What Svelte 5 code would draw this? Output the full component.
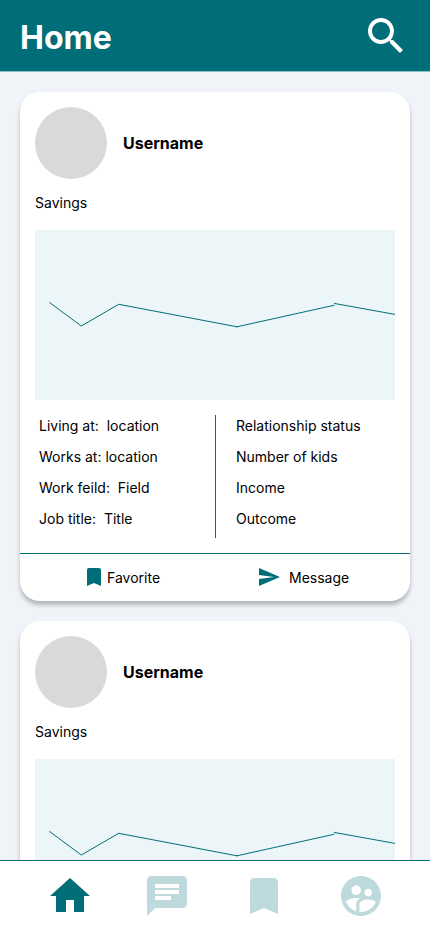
<script>
  const left = ['Living at:  location', 'Works at: location', 'Work feild:  Field', 'Job title:  Title'];
  const right = ['Relationship status', 'Number of kids', 'Income', 'Outcome'];
  const cards = [{ name: 'Username' }, { name: 'Username' }];
  const bookmark = 'M17 3H7c-1.1 0-1.99.9-1.99 2L5 21l7-3 7 3V5c0-1.1-.9-2-2-2z';
  const tabs = [
    { label: 'Home', active: true, d: 'M10 20v-6h4v6h5v-8h3L12 3 2 12h3v8z' },
    { label: 'Messages', d: 'M20 2H4c-1.1 0-1.99.9-1.99 2L2 22l4-4h14c1.1 0 2-.9 2-2V4c0-1.1-.9-2-2-2zM6 6h12v2H6zm0 3h12v2H6zm0 3h8v2H6z' },
    { label: 'Favorites', d: bookmark },
    { label: 'Profile', d: 'M12 2C6.48 2 2 6.48 2 12s4.48 10 10 10 10-4.48 10-10S17.52 2 12 2zm3.61 6.34c1.07 0 1.93.86 1.93 1.93 0 1.07-.86 1.93-1.93 1.93-1.07 0-1.93-.86-1.93-1.93-.01-1.07.86-1.93 1.93-1.93zm-6-1.58c1.3 0 2.36 1.06 2.36 2.36 0 1.3-1.06 2.36-2.36 2.36s-2.36-1.06-2.36-2.36c0-1.31 1.05-2.36 2.36-2.36zm0 9.13v3.75c-2.4-.75-4.3-2.6-5.14-4.96 1.05-1.12 3.67-1.69 5.14-1.69.53 0 1.2.08 1.9.22-1.64.87-1.9 2.02-1.9 2.68zM12 20c-.27 0-.53-.01-.79-.04v-4.07c0-1.42 2.94-2.13 4.4-2.13 1.07 0 2.92.39 3.84 1.15C18.28 17.88 15.39 20 12 20z' }
  ];
</script>

<div class="screen">
  <header>
    <h1>Home</h1>
    <svg class="search" viewBox="0 0 24 24"><path d="M15.5 14h-.79l-.28-.27C15.41 12.59 16 11.11 16 9.5 16 5.91 13.09 3 9.5 3S3 5.91 3 9.5 5.91 16 9.5 16c1.61 0 3.09-.59 4.23-1.57l.27.28v.79l5 4.99L20.49 19l-4.99-5zm-6 0C7.01 14 5 11.99 5 9.5S7.01 5 9.5 5 14 7.01 14 9.5 11.99 14 9.5 14z" /></svg>
  </header>

  <main>
    {#each cards as card}
      <article>
        <div class="user">
          <div class="avatar"></div>
          <h2>{card.name}</h2>
        </div>
        <p class="caption">Savings</p>
        <svg class="chart" viewBox="0 0 360 170">
          <path d="M14.3 72.3L46.3 96L83.7 74.3L202 96.8M201 97L299.5 75.2M299 73.4L360 84.4" />
        </svg>
        <div class="details">
          <ul class="left">
            {#each left as line}<li>{line}</li>{/each}
          </ul>
          <ul class="right">
            {#each right as line}<li>{line}</li>{/each}
          </ul>
        </div>
        <div class="actions">
          <div class="action favorite">
            <svg viewBox="0 0 24 24"><path d={bookmark} /></svg>
            <span>Favorite</span>
          </div>
          <div class="action message">
            <svg viewBox="0 0 24 24"><path d="M2.01 21L23 12 2.01 3 2 10l15 2-15 2z" /></svg>
            <span>Message</span>
          </div>
        </div>
      </article>
    {/each}
  </main>

  <nav>
    {#each tabs as tab}
      <svg class:active={tab.active} viewBox="0 0 24 24" aria-label={tab.label}><path fill-rule="evenodd" d={tab.d} /></svg>
    {/each}
  </nav>
</div>

<style>
  .screen {
    display: flex;
    flex-direction: column;
    height: 932px;
    overflow: hidden;
    background: #f0f4f8;
    color: #000;
    font: 14px/17px Inter, 'Liberation Sans', sans-serif;
  }
  h1, h2, p, ul { margin: 0; padding: 0; }
  svg { display: block; flex: none; }
  header {
    box-sizing: border-box;
    flex: none;
    display: flex;
    align-items: center;
    justify-content: space-between;
    height: 72px;
    padding: 1px 20px 0;
    background: #006e78;
    border-bottom: 1px solid #8bc2c5;
  }
  h1 { padding-top: 2px; color: #fff; font-size: 32px; line-height: 39px; font-weight: 700; }
  .search { width: 48px; height: 48px; fill: #fff; }
  main {
    flex: 1;
    min-height: 0;
    overflow-y: auto;
    scrollbar-width: none;
    display: flex;
    flex-direction: column;
    gap: 20px;
    padding: 20px 20px 0;
  }
  article {
    box-sizing: border-box;
    flex: none;
    height: 509px;
    padding-top: 15px;
    border-radius: 20px;
    background: #fff;
    box-shadow: 0 4px 4px rgba(0, 0, 0, 0.25);
  }
  .user { display: flex; align-items: center; gap: 16px; padding-left: 15px; }
  .avatar { width: 72px; height: 72px; border-radius: 50%; background: #d9d9d9; }
  h2 { font-size: 16px; line-height: 20px; font-weight: 700; }
  .caption { margin: 15px 15px 19px; }
  .chart { width: 360px; height: 170px; margin-left: 15px; background: #ecf6f9; }
  .chart path { fill: none; stroke: #006e78; stroke-width: 1; }
  .details { display: flex; height: 123px; margin: 15px 15px 15px 19px; }
  ul { display: flex; flex-direction: column; gap: 14px; padding-top: 2px; list-style: none; white-space: pre; }
  .left { width: 176px; border-right: 1px solid #006e78; }
  .right { padding-left: 20px; }
  .actions { display: flex; align-items: center; height: 46px; border-top: 1px solid #006e78; }
  .action { display: flex; align-items: center; }
  .action svg { width: 24px; height: 24px; fill: #006e78; }
  .favorite { width: 175px; padding-left: 62px; box-sizing: border-box; gap: 1px; }
  .message { padding-left: 62px; gap: 8px; }
  nav {
    box-sizing: border-box;
    flex: none;
    display: flex;
    justify-content: space-between;
    height: 72px;
    padding: 11px 45px 0 46px;
    background: #fff;
    border-top: 1px solid #006e78;
  }
  nav svg { width: 48px; height: 48px; fill: #bfdadd; }
  nav svg.active { fill: #006e78; }
</style>
